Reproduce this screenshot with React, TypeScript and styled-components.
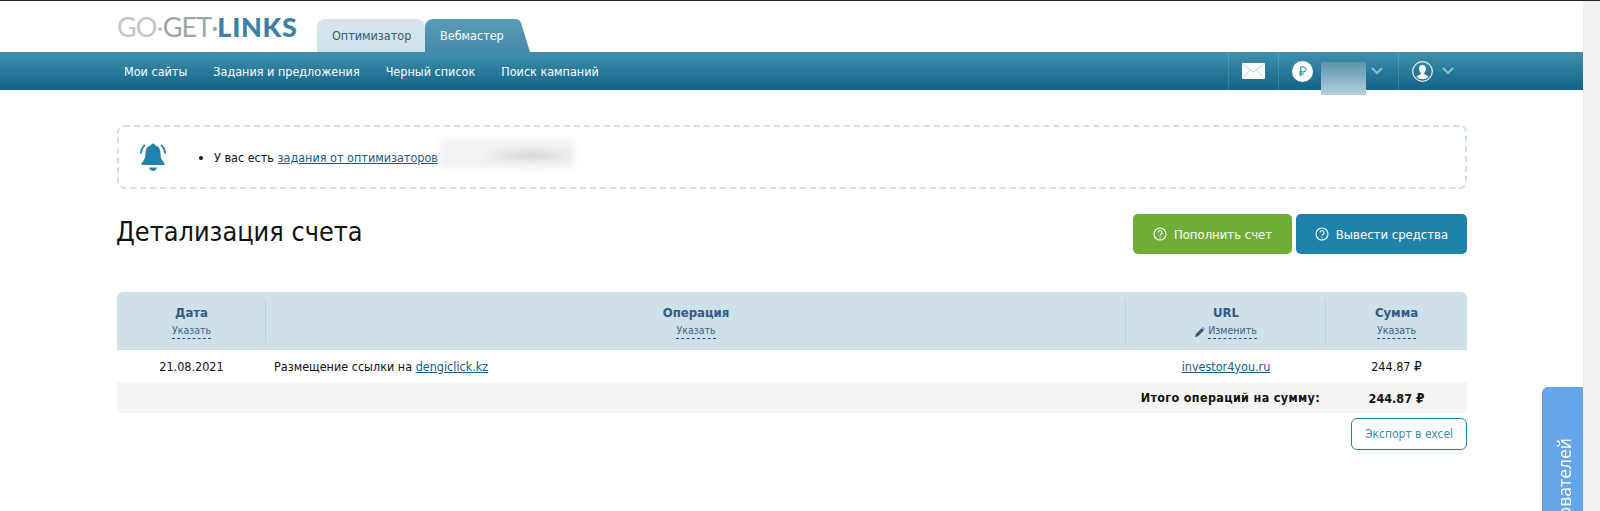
import React from "react";
import styled, { createGlobalStyle } from "styled-components";

const font = `"DejaVu Sans", "Noto Sans", sans-serif`;

const Global = createGlobalStyle`
  html, body { margin: 0; padding: 0; height: 100%; overflow: hidden; background: #fff; }
  body { font-family: ${font}; font-stretch: condensed; font-size: 12px; color: #111; }
  #root { height: 100%; }
`;

const Screen = styled.div`
  height: 511px;
  display: flex;
  position: relative;
  overflow: hidden;
  border-top: 1px solid #222;
  box-sizing: border-box;
`;
const Page = styled.div`
  flex: 1;
  min-width: 0;
`;
const ScrollTrack = styled.div`
  width: 17px;
  background: #f1f1f1;
`;
const Inner = styled.div`
  width: 1350px;
  margin-left: 117px;
`;
const Top = styled.div`
  height: 51px;
`;
const TopInner = styled(Inner)`
  height: 51px;
  display: flex;
  align-items: flex-end;
`;
const Logo = styled.div`
  align-self: flex-start;
  margin-top: 11px;
  width: 200px;
  font-family: Lato, "Open Sans", sans-serif;
  font-stretch: normal;
  font-size: 27px;
  line-height: 30px;
  letter-spacing: -0.9px;
  white-space: nowrap;
  span:nth-child(1) { color: #c2c5c7; }
  span:nth-child(2) { color: #9da5aa; }
  b { color: #3b81a5; font-weight: 900; letter-spacing: 0.7px; }
`;
const Tabs = styled.div`
  display: flex;
  height: 33px;
`;
const Tab = styled.div<{ $active?: boolean }>`
  height: 33px;
  box-sizing: border-box;
  padding: 9px 0 0 15px;
  font-size: 12.5px;
  line-height: 16px;
  border-radius: ${(p) => (p.$active ? "8px 0 0 0" : "8px 8px 0 0")};
  width: ${(p) => (p.$active ? "90px" : "108px")};
  color: ${(p) => (p.$active ? "#fff" : "#2f5a76")};
  background: ${(p) => (p.$active ? "linear-gradient(#5a9bb5, #448aa8)" : "linear-gradient(#d8e6ec, #cfe1e9)")};
  position: relative;
  z-index: ${(p) => (p.$active ? 1 : 0)};
`;
const TabSlant = styled.svg`
  position: absolute;
  left: 89px;
  top: 0;
`;
const NavBar = styled.div`
  height: 38px;
  background: linear-gradient(#4090ac, #13638a);
`;
const NavInner = styled(Inner)`
  height: 38px;
  display: flex;
  align-items: center;
`;
const NavItem = styled.a`
  color: #fff;
  font-size: 12.5px;
  margin-right: 26px;
  white-space: nowrap;
  &:first-child { margin-left: 7px; }
`;
const NavRight = styled.div`
  margin-left: auto;
  height: 38px;
  display: flex;
  position: relative;
`;
const NavCell = styled.div<{ $w: number }>`
  width: ${(p) => p.$w}px;
  height: 38px;
  box-sizing: border-box;
  border-left: 1px solid rgba(255, 255, 255, 0.14);
  display: flex;
  align-items: center;
  padding-left: 13px;
  position: relative;
`;
const ChevronSlot = styled.div<{ $gap: number }>`
  margin-left: ${(p) => p.$gap}px;
  display: flex;
`;
const MoneyBlur = styled.div`
  position: absolute;
  left: 42px;
  top: 10px;
  width: 45px;
  height: 33px;
  background: linear-gradient(#5a94ae, #b5d0dc);
`;
const Content = styled(Inner)`
  padding-top: 35px;
`;
const Alert = styled.div`
  height: 64px;
  box-sizing: border-box;
  border: 2px dashed #cfe2e8;
  border-radius: 7px;
  display: flex;
  align-items: center;
  position: relative;
`;
const BellBox = styled.div`
  width: 66px;
  padding-left: 20px;
  box-sizing: border-box;
  display: flex;
`;
const AlertList = styled.ul`
  margin: 0;
  padding: 0 0 0 29px;
  font-size: 12.5px;
`;
const Link = styled.a`
  color: #1d5a85;
  text-decoration: underline;
`;
const Blur = styled.div`
  position: absolute;
  left: 321px;
  top: 12px;
  width: 134px;
  height: 30px;
  background: radial-gradient(ellipse 40% 30% at 68% 55%, #d5d2d4 0%, #e6e4e5 60%, #f3f3f3 100%);
  filter: blur(3px);
`;
const TitleRow = styled.div`
  display: flex;
  justify-content: space-between;
  margin-top: 25px;
  height: 78px;
`;
const Title = styled.h1`
  margin: 0 0 0 -1px;
  font-weight: 400;
  font-size: 26.8px;
  line-height: 36px;
  color: #111;
`;
const Buttons = styled.div`
  display: flex;
  gap: 4px;
`;
const Action = styled.div<{ $bg: string; $w: number }>`
  width: ${(p) => p.$w}px;
  height: 40px;
  border-radius: 5px;
  background: ${(p) => p.$bg};
  color: #fff;
  font-size: 13px;
  display: flex;
  align-items: center;
  justify-content: center;
  gap: 7px;
`;
const Grid = styled.div`
  display: grid;
  grid-template-columns: 149px 860px 200px 141px;
`;
const Head = styled(Grid)`
  height: 58px;
  background: #cee0e8;
  border-radius: 6px 6px 0 0;
`;
const HeadCell = styled.div`
  margin: 7px 0;
  display: flex;
  flex-direction: column;
  align-items: center;
  box-shadow: inset -1px 0 0 #bcd1da;
  &:last-child { box-shadow: none; }
`;
const HeadTitle = styled.div`
  font-weight: 700;
  font-size: 13px;
  line-height: 16px;
  margin-top: 6px;
  color: #2f5b85;
`;
const HeadLink = styled.div`
  font-size: 10.5px;
  line-height: 13px;
  margin-top: 3px;
  display: flex;
  align-items: center;
  gap: 3px;
  color: #3a6485;
`;
const Dashed = styled.span`
  border-bottom: 1px dashed #23527c;
  padding-bottom: 1px;
`;
const Row = styled(Grid)`
  height: 32px;
  align-items: center;
  font-size: 12.5px;
`;
const Center = styled.div`
  text-align: center;
`;
const Left = styled.div`
  padding-left: 8px;
`;
const Total = styled(Grid)`
  height: 31px;
  align-items: center;
  background: #f5f5f5;
  border-radius: 0 0 4px 4px;
  font-weight: 700;
  font-size: 12.5px;
`;
const TotalLabel = styled.div`
  grid-column: 1 / 4;
  text-align: right;
  padding-right: 6px;
  letter-spacing: 0.33px;
`;
const RubleSign = styled.span`
  font-size: 13.5px;
`;
const Footer = styled.div`
  display: flex;
  justify-content: flex-end;
  margin-top: 5px;
`;
const Export = styled.div`
  width: 116px;
  height: 32px;
  box-sizing: border-box;
  border: 1px solid #1f82ab;
  border-radius: 6px;
  color: #3d8bb0;
  font-size: 12px;
  display: flex;
  align-items: center;
  justify-content: center;
`;
const SideTab = styled.div`
  position: absolute;
  left: 1542px;
  top: 386px;
  width: 41px;
  height: 200px;
  background: #65a5ec;
  border-radius: 6px 0 0 0;
  border-left: 1px solid #8b8f96;
  box-sizing: border-box;
  color: #fff;
  overflow: hidden;
`;
const SideText = styled.div`
  position: absolute;
  top: 51px;
  left: 9px;
  writing-mode: vertical-rl;
  transform: rotate(180deg);
  font-family: "Open Sans", sans-serif;
  font-stretch: normal;
  font-weight: 500;
  font-size: 17.5px;
  line-height: 24px;
  white-space: nowrap;
`;

const Question = () => (
  <svg width="14" height="14" viewBox="0 0 14 14" fill="none" stroke="#fff" strokeWidth="1.1">
    <circle cx="7" cy="7" r="6" />
    <path d="M5 5.6a2 2 0 1 1 3 1.7c-.7.4-1 .7-1 1.5" />
    <path d="M7 10v.9" />
  </svg>
);
const Chevron = () => (
  <svg width="12" height="8" viewBox="0 0 12 8" fill="none" stroke="#8fbccd" strokeWidth="2">
    <path d="M1 1l5 5 5-5" />
  </svg>
);

export default function App() {
  return (
    <Screen>
      <Global />
      <Page>
        <Top>
          <TopInner>
            <Logo>
              <span>GO·</span>
              <span>GET·</span>
              <b>LINKS</b>
            </Logo>
            <Tabs>
              <Tab>Оптимизатор</Tab>
              <Tab $active>
                Вебмастер
                <TabSlant width="16" height="33" viewBox="0 0 16 33">
                  <defs>
                    <linearGradient id="tabFill" x1="0" y1="0" x2="0" y2="1">
                      <stop offset="0" stopColor="#5a9bb5" />
                      <stop offset="1" stopColor="#448aa8" />
                    </linearGradient>
                  </defs>
                  <path d="M0 0h1c3 0 5 1 6 4l9 29H0z" fill="url(#tabFill)" />
                </TabSlant>
              </Tab>
            </Tabs>
          </TopInner>
        </Top>
        <NavBar>
          <NavInner>
            <NavItem>Мои сайты</NavItem>
            <NavItem>Задания и предложения</NavItem>
            <NavItem>Черный список</NavItem>
            <NavItem>Поиск кампаний</NavItem>
            <NavRight>
              <NavCell $w={50}>
                <svg width="23" height="16" viewBox="0 0 23 16">
                  <rect width="23" height="16" rx="1" fill="#fff" />
                  <path d="M0.5 1l11 8 11-8M0.5 15l8-8M22.5 15l-8-8" fill="none" stroke="#a9c6d6" strokeWidth="0.8" />
                </svg>
              </NavCell>
              <NavCell $w={120}>
                <svg width="21" height="21" viewBox="0 0 21 21">
                  <circle cx="10.5" cy="10.5" r="10.5" fill="#fff" />
                  <path d="M8.8 5.800v9.600M8.800 6h2.800a2.400 2.400 0 0 1 0 4.900H7M7 13h5" fill="none" stroke="#1d7ea6" strokeWidth="1" />
                </svg>
                <MoneyBlur />
                <ChevronSlot $gap={58}>
                  <Chevron />
                </ChevronSlot>
              </NavCell>
              <NavCell $w={69}>
                <svg width="21" height="21" viewBox="0 0 21 21">
                  <circle cx="10.5" cy="10.5" r="9.8" fill="none" stroke="#f3efe0" strokeWidth="1.2" />
                  <path d="M10.500 4c2.400 0 3.600 1.800 3.400 4-.1 1.500-.7 2.800-1.600 3.600v1.600c1.600.7 3.400 1.400 4.400 2.500a8.600 8.600 0 0 1-12.400 0c1-1.100 2.800-1.800 4.400-2.500v-1.600C7.800 10.800 7.200 9.500 7.100 8 6.900 5.800 8.100 4 10.500 4z" fill="#fff" />
                </svg>
                <ChevronSlot $gap={9}>
                  <Chevron />
                </ChevronSlot>
              </NavCell>
            </NavRight>
          </NavInner>
        </NavBar>
        <Content>
          <Alert>
            <BellBox>
              <svg width="28" height="31" viewBox="0 0 28 31" fill="#2083ad">
                <path d="M14 1.500c1.100 0 1.900.8 1.900 1.800 3.900.9 5.600 4 5.600 8 0 5 1.600 7.500 4 10 .5.600.2 1.700-.8 1.700H3.300c-1 0-1.300-1.100-.8-1.700 2.400-2.500 4-5 4-10 0-4 1.700-7.100 5.600-8 0-1 .8-1.800 1.900-1.800z" />
                <path d="M10 25.500h8c-.6 2-2.200 3.500-4 3.500s-3.400-1.500-4-3.500z" />
                <path d="M6 3C3.500 5 2 8 2 11.500M22 3c2.500 2 4 5 4 8.500" fill="none" stroke="#2083ad" strokeWidth="1.800" />
              </svg>
            </BellBox>
            <AlertList>
              <li>
                У вас есть <Link>задания от оптимизаторов</Link>
              </li>
            </AlertList>
            <Blur />
          </Alert>
          <TitleRow>
            <Title>Детализация счета</Title>
            <Buttons>
              <Action $bg="#6fae35" $w={159}>
                <Question />
                Пополнить счет
              </Action>
              <Action $bg="#1f82ab" $w={171}>
                <Question />
                Вывести средства
              </Action>
            </Buttons>
          </TitleRow>
          <Head>
            <HeadCell>
              <HeadTitle>Дата</HeadTitle>
              <HeadLink>
                <Dashed>Указать</Dashed>
              </HeadLink>
            </HeadCell>
            <HeadCell>
              <HeadTitle>Операция</HeadTitle>
              <HeadLink>
                <Dashed>Указать</Dashed>
              </HeadLink>
            </HeadCell>
            <HeadCell>
              <HeadTitle>URL</HeadTitle>
              <HeadLink>
                <svg width="10" height="10" viewBox="0 0 10 10" fill="#3a5a78">
                  <path d="M0 10l.8-3L6.800 1l2.200 2.200-6 6zM7.500.4l.6-.4 1.900 1.900-.4.600z" />
                </svg>
                <Dashed>Изменить</Dashed>
              </HeadLink>
            </HeadCell>
            <HeadCell>
              <HeadTitle>Сумма</HeadTitle>
              <HeadLink>
                <Dashed>Указать</Dashed>
              </HeadLink>
            </HeadCell>
          </Head>
          <Row>
            <Center>21.08.2021</Center>
            <Left>
              Размещение ссылки на <Link>dengiclick.kz</Link>
            </Left>
            <Center>
              <Link>investor4you.ru</Link>
            </Center>
            <Center>
              244.87 <RubleSign>₽</RubleSign>
            </Center>
          </Row>
          <Total>
            <TotalLabel>Итого операций на сумму:</TotalLabel>
            <Center>
              244.87 <RubleSign>₽</RubleSign>
            </Center>
          </Total>
          <Footer>
            <Export>Экспорт в excel</Export>
          </Footer>
        </Content>
      </Page>
      <ScrollTrack />
      <SideTab>
        <SideText>Отзывы пользователей</SideText>
      </SideTab>
    </Screen>
  );
}
